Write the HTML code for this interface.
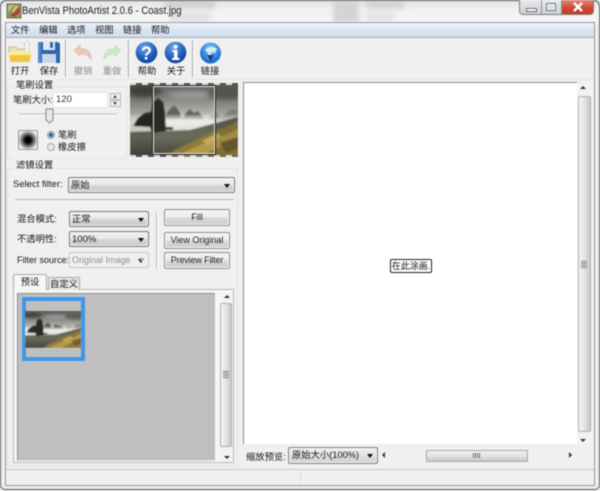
<!DOCTYPE html>
<html><head><meta charset="utf-8">
<style>
html,body{margin:0;padding:0;background:#fff}
#w{position:relative;width:600px;height:491px;overflow:hidden;background:#eceded;font-family:"Liberation Sans","Noto Sans CJK SC",sans-serif;font-size:9.3px;color:#151515;filter:blur(.4px)}
.a{position:absolute}
.t{position:absolute;white-space:nowrap;line-height:14px}
.btn{position:absolute;box-sizing:border-box;border:1px solid #8f8f8f;border-radius:2px;background:linear-gradient(#f4f4f4,#ececec 48%,#d8d8d8 52%,#cdcdcd);text-align:center;font-size:9px;line-height:15px;color:#222;box-shadow:inset 0 0 0 1px #f5f5f5;white-space:nowrap}
.cb{position:absolute;box-sizing:border-box;border:1px solid #777;border-radius:2px;background:linear-gradient(#f3f3f3,#e8e8e8 48%,#d6d6d6 52%,#c9c9c9);line-height:15px;padding-left:2px;box-shadow:inset 0 0 0 1px #f2f2f2;white-space:nowrap;overflow:hidden}
.cb:after{content:"";position:absolute;right:4px;top:6px;border:3.5px solid transparent;border-top:4px solid #111;border-bottom:0}
.sep{position:absolute;width:1px;background:#a8a8a8;border-right:1px solid #fff}
.lbl{position:absolute;width:36px;text-align:center;line-height:13px;white-space:nowrap}
</style></head><body><div id="w">
<svg width="0" height="0" style="position:absolute">
 <defs>
 <linearGradient id="sky" x1="0" y1="0" x2="0" y2="1"><stop offset="0" stop-color="#5b5d59"/><stop offset=".18" stop-color="#7b7c77"/><stop offset=".38" stop-color="#aeaea8"/><stop offset=".5" stop-color="#d0d0ca"/></linearGradient>
 <linearGradient id="mist" x1="0" y1="0" x2="0" y2="1"><stop offset="0" stop-color="#e8e8e4" stop-opacity=".3"/><stop offset=".4" stop-color="#ecece8"/><stop offset="1" stop-color="#dcdcd6"/></linearGradient>
 <linearGradient id="gnd" x1="0" y1="0" x2="0" y2="1"><stop offset="0" stop-color="#5d5d50"/><stop offset=".5" stop-color="#6b6b5b"/><stop offset="1" stop-color="#45453a"/></linearGradient>
 <radialGradient id="b1" cx=".4" cy=".25" r=".9"><stop offset="0" stop-color="#6aa6ea"/><stop offset=".6" stop-color="#1c57b5"/><stop offset="1" stop-color="#123e8f"/></radialGradient>
 <radialGradient id="b2" cx=".5" cy=".3" r=".8"><stop offset="0" stop-color="#8cc8f4"/><stop offset=".6" stop-color="#2a7fd8"/><stop offset="1" stop-color="#1858ae"/></radialGradient>
 <filter id="f1" x="-5%" y="-5%" width="110%" height="110%"><feGaussianBlur stdDeviation=".9"/></filter><filter id="f2" x="-20%" y="-20%" width="140%" height="140%"><feGaussianBlur stdDeviation="2.5"/></filter>
 <symbol id="pic" viewBox="0 0 108 74" preserveAspectRatio="none">
 <rect width="108" height="74" fill="url(#sky)"/>
 <g filter="url(#f2)">
 <ellipse cx="14" cy="8" rx="18" ry="6" fill="#44463f"/>
 <ellipse cx="60" cy="12" rx="22" ry="4" fill="#9a9a94"/>
 <ellipse cx="95" cy="10" rx="18" ry="6" fill="#5c5d57"/>
 </g>
 <g filter="url(#f1)">
 <path d="M34 36L38 28L44 22L49 28L52 36Z" fill="#62645e"/>
 <path d="M52 36L56 30L60 26L64 30L68 28L74 36Z" fill="#62645e"/>
 <path d="M78 36L86 30L94 36Z" fill="#85867f"/>
 <path d="M92 34L100 27L108 26V38H92Z" fill="#8c8c82"/>
 <rect y="32" width="108" height="17" fill="url(#mist)"/>
 <path d="M0 49L60 47L108 34V74H0Z" fill="url(#gnd)"/>
 <path d="M3 43L8 35L15 30L21 29L23 19L28 15L33 19L35 30L36 48L22 50L20 44Z" fill="#2a2925"/>
 <path d="M36 44H43V47H36Z" fill="#35342e"/>
 <path d="M36 74C46 64 58 62 68 56C78 50 94 46 108 38V74Z" fill="#8f7c3a"/>
 <path d="M50 72C66 62 84 58 108 46V58C92 62 80 68 70 74H50Z" fill="#b39a4a"/>
 <path d="M90 60L108 54V66L96 70Z" fill="#6f6030"/>
 <path d="M72 58L88 50L92 54L78 62Z" fill="#c4ac5a"/>
 </g>
 </symbol>
 </defs>
</svg>
<!-- title bar -->
<div class="a" style="left:0;top:0;width:600px;height:24px;background:linear-gradient(#dfe1e4,#f1f2f3 40%,#f4f5f6)"></div>
<div class="a" style="left:165px;top:1px;width:50px;height:7px;background:#c9cbce;filter:blur(3px)"></div>
<div class="a" style="left:170px;top:14px;width:40px;height:6px;background:#d8d9db;filter:blur(3px)"></div>
<div class="a" style="left:333px;top:1px;width:26px;height:21px;background:#d2d4d6;filter:blur(2px)"></div>
<div class="a" style="left:366px;top:2px;width:38px;height:6px;background:#c9cbce;filter:blur(3px)"></div>
<div class="a" style="left:366px;top:14px;width:28px;height:5px;background:#d8d9db;filter:blur(3px)"></div>
<div class="a" style="left:0;top:0;width:600px;height:490px;border:1px solid #555;border-radius:6px 6px 5px 5px;box-sizing:border-box"></div>
<svg class="a" style="left:6px;top:3px" width="16" height="16" viewBox="0 0 16 16"><rect x="1" y="1" width="14" height="14" fill="#7fa04a" stroke="#7a6a55"/><path d="M2 2H9L2 9Z" fill="#c9b48c"/><path d="M4 13L13 4L14 9L9 14Z" fill="#b83a5a"/><path d="M7 9L11 3" stroke="#e8d25a" stroke-width="2"/></svg>
<div class="t" style="left:22px;top:4px;font-size:11px;color:#1a1a1a;transform:scaleX(.865);transform-origin:0 0">BenVista PhotoArtist 2.0.6 - Coast.jpg</div>
<!-- caption buttons -->
<div class="a" style="left:519px;top:0;width:75px;height:15px;box-sizing:border-box;border:1px solid #7d7d7d;border-top:0;border-radius:0 0 4px 4px;background:linear-gradient(#e8e9ea,#cfd1d3);overflow:hidden">
 <div class="a" style="left:21px;top:0;width:1px;height:14px;background:#8f8f8f"></div>
 <div class="a" style="left:41px;top:0;width:1px;height:14px;background:#8f8f8f"></div>
 <div class="a" style="left:42px;top:0;width:33px;height:14px;background:linear-gradient(#e0897a,#cf4b35 55%,#c23c28)"></div>
 <div class="a" style="left:6px;top:8px;width:9px;height:2px;background:#fff;border:1px solid #66707c"></div>
 <div class="a" style="left:26px;top:3px;width:8px;height:6px;border:1px solid #66707c;box-shadow:inset 0 0 0 1px #fff"></div>
 <svg class="a" style="left:52px;top:2px" width="12" height="10"><path d="M2 1L10 9M10 1L2 9" stroke="#fff" stroke-width="2.4"/></svg>
</div>
<!-- client -->
<div class="a" style="left:5px;top:22px;width:590px;height:464px;background:#f0f0f0;box-sizing:border-box;border:1px solid #999"></div>
<div class="a" style="left:6px;top:23px;width:588px;height:14px;background:linear-gradient(#eef3fb,#dbe4f4 50%,#d3dcee);border-bottom:1px solid #a9a9a9"></div>
<div class="t" style="left:11px;top:23px">文件</div>
<div class="t" style="left:39px;top:23px">编辑</div>
<div class="t" style="left:67px;top:23px">选项</div>
<div class="t" style="left:95px;top:23px">视图</div>
<div class="t" style="left:123px;top:23px">链接</div>
<div class="t" style="left:151px;top:23px">帮助</div>
<!-- toolbar icons -->
<svg class="a" style="left:8px;top:41px" width="24" height="22" viewBox="0 0 24 22"><path d="M1 6H8L10 8H19V12H1Z" fill="#e8dfb8" stroke="#a89858" stroke-width=".6"/><path d="M17 13V3H15L19 0L23 3H21V13Z" fill="#f4f4f0" stroke="#bbb" stroke-width=".5"/><path d="M1 10H23L22 21H2Z" fill="#eec83a"/><path d="M1 10H23L22.6 14H1.3Z" fill="#fbeb9a"/></svg>
<svg class="a" style="left:38px;top:41px" width="22" height="22" viewBox="0 0 22 22"><path d="M0 1H20L22 3V22H0Z" fill="#2c68b0"/><rect x="5" y="0" width="12" height="9" fill="#e4e8ee"/><rect x="12" y="1" width="3" height="6" fill="#3a70b0"/><rect x="4" y="13" width="14" height="9" fill="#c8d8ea"/><rect x="0" y="1" width="3" height="21" fill="#4e8acc"/></svg>
<svg class="a" style="left:73px;top:44px" width="20" height="17" viewBox="0 0 22 19"><path d="M1 7L8 1V5C15 5 21 8 20 18C18 13 14 11 8 11V14Z" fill="#ecc5b8" stroke="#ddb6a8" stroke-width=".6"/></svg>
<svg class="a" style="left:102px;top:44px" width="20" height="17" viewBox="0 0 22 19"><path d="M21 7L14 1V5C7 5 1 8 2 18C4 13 8 11 14 11V14Z" fill="#cfe6c8" stroke="#bcd8b6" stroke-width=".6"/></svg>
<div class="sep" style="left:65px;top:40px;height:37px"></div>
<div class="sep" style="left:128px;top:40px;height:37px"></div>
<div class="sep" style="left:192px;top:40px;height:37px"></div>
<svg class="a" style="left:135px;top:41px" width="23" height="23" viewBox="0 0 23 23"><circle cx="11.5" cy="11.5" r="10.8" fill="url(#b1)"/><text x="11.5" y="18.5" text-anchor="middle" font-family="Liberation Sans" font-weight="bold" font-size="18" fill="#fff">?</text></svg>
<svg class="a" style="left:164px;top:41px" width="23" height="23" viewBox="0 0 23 23"><circle cx="11.5" cy="11.5" r="10.8" fill="url(#b1)"/><circle cx="11.5" cy="5.8" r="2.1" fill="#fff"/><path d="M8.5 9H13.5V17H15.5V19H8V17H10V11H8.5Z" fill="#fff"/></svg>
<svg class="a" style="left:199px;top:42px" width="23" height="22" viewBox="0 0 23 22"><circle cx="11.5" cy="11" r="10.5" fill="url(#b2)"/><path d="M6 8C9 4 15 4 18 7L16 11L12 10L13 16L11 20L8 15L9 11Z" fill="#e8f4fc" opacity=".85"/><path d="M8 13L11 20L15 13Z" fill="#123e8f"/></svg>
<div class="lbl" style="left:2px;top:65px">打开</div>
<div class="lbl" style="left:31px;top:65px">保存</div>
<div class="lbl" style="left:65px;top:65px;color:#8d8d8d">撤销</div>
<div class="lbl" style="left:94px;top:65px;color:#8d8d8d">重做</div>
<div class="lbl" style="left:129px;top:65px">帮助</div>
<div class="lbl" style="left:158px;top:65px">关于</div>
<div class="lbl" style="left:192px;top:65px">链接</div>
<div class="a" style="left:6px;top:79px;width:588px;height:1px;background:#e4e4e4"></div>

<!-- brush group -->
<div class="a" style="left:7px;top:86px;width:118px;height:71px;border:1px solid #e2e2e2;border-radius:2px"></div>
<div class="t" style="left:14px;top:78px;background:#f0f0f0;padding:0 2px">笔刷设置</div>
<div class="t" style="left:13px;top:93px">笔刷大小:</div>
<div class="a" style="left:53px;top:92px;width:55px;height:16px;background:#fff;border:1px solid #e8e8e8;box-sizing:border-box;padding-left:2px;line-height:14px;font-size:9.5px;color:#333">120</div>
<div class="a" style="left:110px;top:93px;width:11px;height:7px;box-sizing:border-box;border:1px solid #bbb;background:#f0f0f0"><div class="a" style="left:2px;top:1px;border:2.5px solid transparent;border-bottom:3px solid #445;border-top:0"></div></div>
<div class="a" style="left:110px;top:100px;width:11px;height:7px;box-sizing:border-box;border:1px solid #bbb;background:#f0f0f0"><div class="a" style="left:2px;top:1px;border:2.5px solid transparent;border-top:3px solid #445;border-bottom:0"></div></div>
<div class="a" style="left:19px;top:113px;width:98px;height:2px;background:#d4d4d4;border-bottom:1px solid #fff"></div>
<svg class="a" style="left:45px;top:108px" width="9" height="16"><path d="M1 1H8V12L4.5 15L1 12Z" fill="#e8e8e8" stroke="#858585"/></svg>
<div class="a" style="left:18px;top:130px;width:20px;height:20px;box-sizing:border-box;border:1px solid #9a9a9a;background:radial-gradient(circle,#000 0,#000 22%,#777 50%,#eee 78%,#f8f8f8)"></div>
<div class="a" style="left:47px;top:131px;width:8px;height:8px;box-sizing:border-box;border-radius:50%;border:1px solid #8a9aa8;background:radial-gradient(circle,#1f6a98 0,#1f6a98 45%,#cfe8f4 60%,#e8eef2)"></div>
<div class="a" style="left:47px;top:143px;width:8px;height:8px;box-sizing:border-box;border-radius:50%;border:1px solid #a5a5a5;background:#e8e8e8"></div>
<div class="t" style="left:58px;top:128px">笔刷</div>
<div class="t" style="left:58px;top:140px">橡皮擦</div>

<!-- thumbnail -->
<svg class="a" style="left:130px;top:83px" width="108" height="74" viewBox="0 0 108 74">
 <use href="#pic" width="108" height="74"/>
 <rect x="0" y="0" width="22" height="74" fill="#000" opacity=".1"/>
 <rect x="86" y="0" width="22" height="74" fill="#000" opacity=".1"/>
 <rect x="22.5" y="2.5" width="63" height="69" fill="none" stroke="#222" stroke-width="1"/>
 <rect x="23.5" y="3.5" width="61" height="67" fill="none" stroke="#e6e6e6" stroke-width="1"/>
 <path d="M0 1H108M0 73H108" stroke="#ddd" stroke-width="2" stroke-dasharray="6 6"/>
 <path d="M0 1H108M0 73H108" stroke="#555" stroke-width="2" stroke-dasharray="6 6" stroke-dashoffset="6" opacity=".4"/>
</svg>

<!-- filter group -->
<div class="a" style="left:7px;top:168px;width:231px;height:299px;border:1px solid #e2e2e2;box-sizing:border-box;border-radius:2px"></div>
<div class="t" style="left:14px;top:158px;background:#f0f0f0;padding:0 2px">滤镜设置</div>
<div class="t" style="left:13px;top:178px;font-size:9.5px">Select filter:</div>
<div class="cb" style="left:68px;top:177px;width:167px;height:16px">原始</div>
<div class="a" style="left:15px;top:199px;width:219px;height:1px;background:#b8b8b8"></div>
<div class="t" style="left:17px;top:212px">混合模式:</div>
<div class="cb" style="left:69px;top:211px;width:80px;height:16px">正常</div>
<div class="t" style="left:17px;top:232px">不透明性:</div>
<div class="cb" style="left:69px;top:231px;width:80px;height:16px;font-size:9.5px">100%</div>
<div class="t" style="left:17px;top:253px;font-size:9px">Filter source:</div>
<div class="cb" style="left:69px;top:252px;width:80px;height:16px;background:#f0f0f0;border-color:#c4c4c4;color:#8e8e8e;font-size:9px">Original Image</div>
<div class="a" style="left:139px;top:258px;border:3.5px solid transparent;border-top:4px solid #aaa;border-bottom:0"></div>
<div class="a" style="left:156px;top:213px;width:1px;height:56px;background:#b4b4b4;border-right:1px solid #fff"></div>
<div class="btn" style="left:164px;top:209px;width:66px;height:17px">Fill</div>
<div class="btn" style="left:164px;top:232px;width:66px;height:17px">View Original</div>
<div class="btn" style="left:164px;top:252px;width:66px;height:17px;letter-spacing:-.15px">Preview Filter</div>

<!-- tabs -->
<div class="a" style="left:13px;top:289px;width:221px;height:174px;box-sizing:border-box;border:1px solid #b8b8b8;background:#f6f6f6"></div>
<div class="a" style="left:48px;top:277px;width:32px;height:13px;box-sizing:border-box;border:1px solid #a8a8a8;border-bottom:0;background:#e6e6e6;text-align:center;line-height:13px;white-space:nowrap">自定义</div>
<div class="a" style="left:13px;top:274px;width:34px;height:16px;box-sizing:border-box;border:1px solid #a8a8a8;border-bottom:0;background:#f6f6f6;text-align:center;line-height:15px;border-radius:2px 2px 0 0">预设</div>
<div class="a" style="left:17px;top:293px;width:198px;height:168px;background:#bfbfbf;box-sizing:border-box;border:1px solid #8f8f8f;border-right:0;border-bottom-color:#ddd"></div>
<div class="a" style="left:22px;top:297px;width:63px;height:64px;box-sizing:border-box;border:4px solid #3f97ec;background:#bfbfbf"></div>
<svg class="a" style="left:25px;top:311px" width="56" height="37" viewBox="0 0 56 37"><use href="#pic" width="56" height="37"/></svg>
<!-- left scrollbar -->
<div class="a" style="left:220px;top:293px;width:13px;height:168px;background:#f3f3f3"></div>
<div class="a" style="left:224px;top:295px;border:3px solid transparent;border-bottom:3px solid #333;border-top:0"></div>
<div class="a" style="left:224px;top:456px;border:3px solid transparent;border-top:3px solid #333;border-bottom:0"></div>
<div class="a" style="left:220px;top:303px;width:12px;height:144px;box-sizing:border-box;border:1px solid #b0b0b0;border-radius:2px;background:linear-gradient(90deg,#f4f4f4,#e4e4e4 50%,#c8c8c8)"></div>
<div class="a" style="left:223px;top:371px;width:6px;height:7px;background:repeating-linear-gradient(#777 0 1px,#eee 1px 2px)"></div>

<!-- canvas -->
<div class="a" style="left:243px;top:82px;width:334px;height:362px;background:#fff;border-top:1px solid #8a8a8a;border-left:1px solid #8a8a8a;box-sizing:border-box"></div>
<div class="a" style="left:390px;top:259px;width:42px;height:14px;box-sizing:border-box;border:1px solid #222;border-radius:2px;background:#fff;font-size:9px;line-height:12px;text-align:center;white-space:nowrap;color:#111">在此涂画.</div>
<!-- right scrollbar -->
<div class="a" style="left:577px;top:83px;width:16px;height:360px;background:#f3f3f3"></div>
<div class="a" style="left:580px;top:86px;border:3px solid transparent;border-bottom:3px solid #333;border-top:0"></div>
<div class="a" style="left:580px;top:439px;border:3px solid transparent;border-top:3px solid #333;border-bottom:0"></div>
<div class="a" style="left:578px;top:96px;width:13px;height:336px;box-sizing:border-box;border:1px solid #b0b0b0;border-radius:2px;background:linear-gradient(90deg,#f4f4f4,#e4e4e4 50%,#c8c8c8)"></div>
<div class="a" style="left:581px;top:261px;width:6px;height:7px;background:repeating-linear-gradient(#777 0 1px,#eee 1px 2px)"></div>
<!-- bottom -->
<div class="t" style="left:246px;top:450px">缩放预览:</div>
<div class="cb" style="left:288px;top:447px;width:90px;height:17px;background:linear-gradient(#f2f2f2,#e2e2e2 50%,#cfcfcf);border-color:#808080;padding-left:3px">原始大小(100%)</div>
<div class="a" style="left:382px;top:452px;border:3px solid transparent;border-right:3px solid #333;border-left:0"></div>
<div class="a" style="left:569px;top:452px;border:3px solid transparent;border-left:3px solid #333;border-right:0"></div>
<div class="a" style="left:426px;top:450px;width:102px;height:12px;box-sizing:border-box;border:1px solid #a8a8a8;border-radius:1px;background:linear-gradient(#f2f2f2,#e2e2e2 50%,#c8c8c8)"></div>
<div class="a" style="left:473px;top:453px;width:7px;height:5px;background:repeating-linear-gradient(90deg,#666 0 1px,#eee 1px 2px)"></div>
<!-- status -->
<div class="a" style="left:6px;top:469px;width:588px;height:16px;background:#f1efef;border-top:1px solid #c8c8c8;box-sizing:border-box"></div>
<div class="a" style="left:300px;top:470px;width:1px;height:15px;background:#e0dede"></div>
</div></body></html>
